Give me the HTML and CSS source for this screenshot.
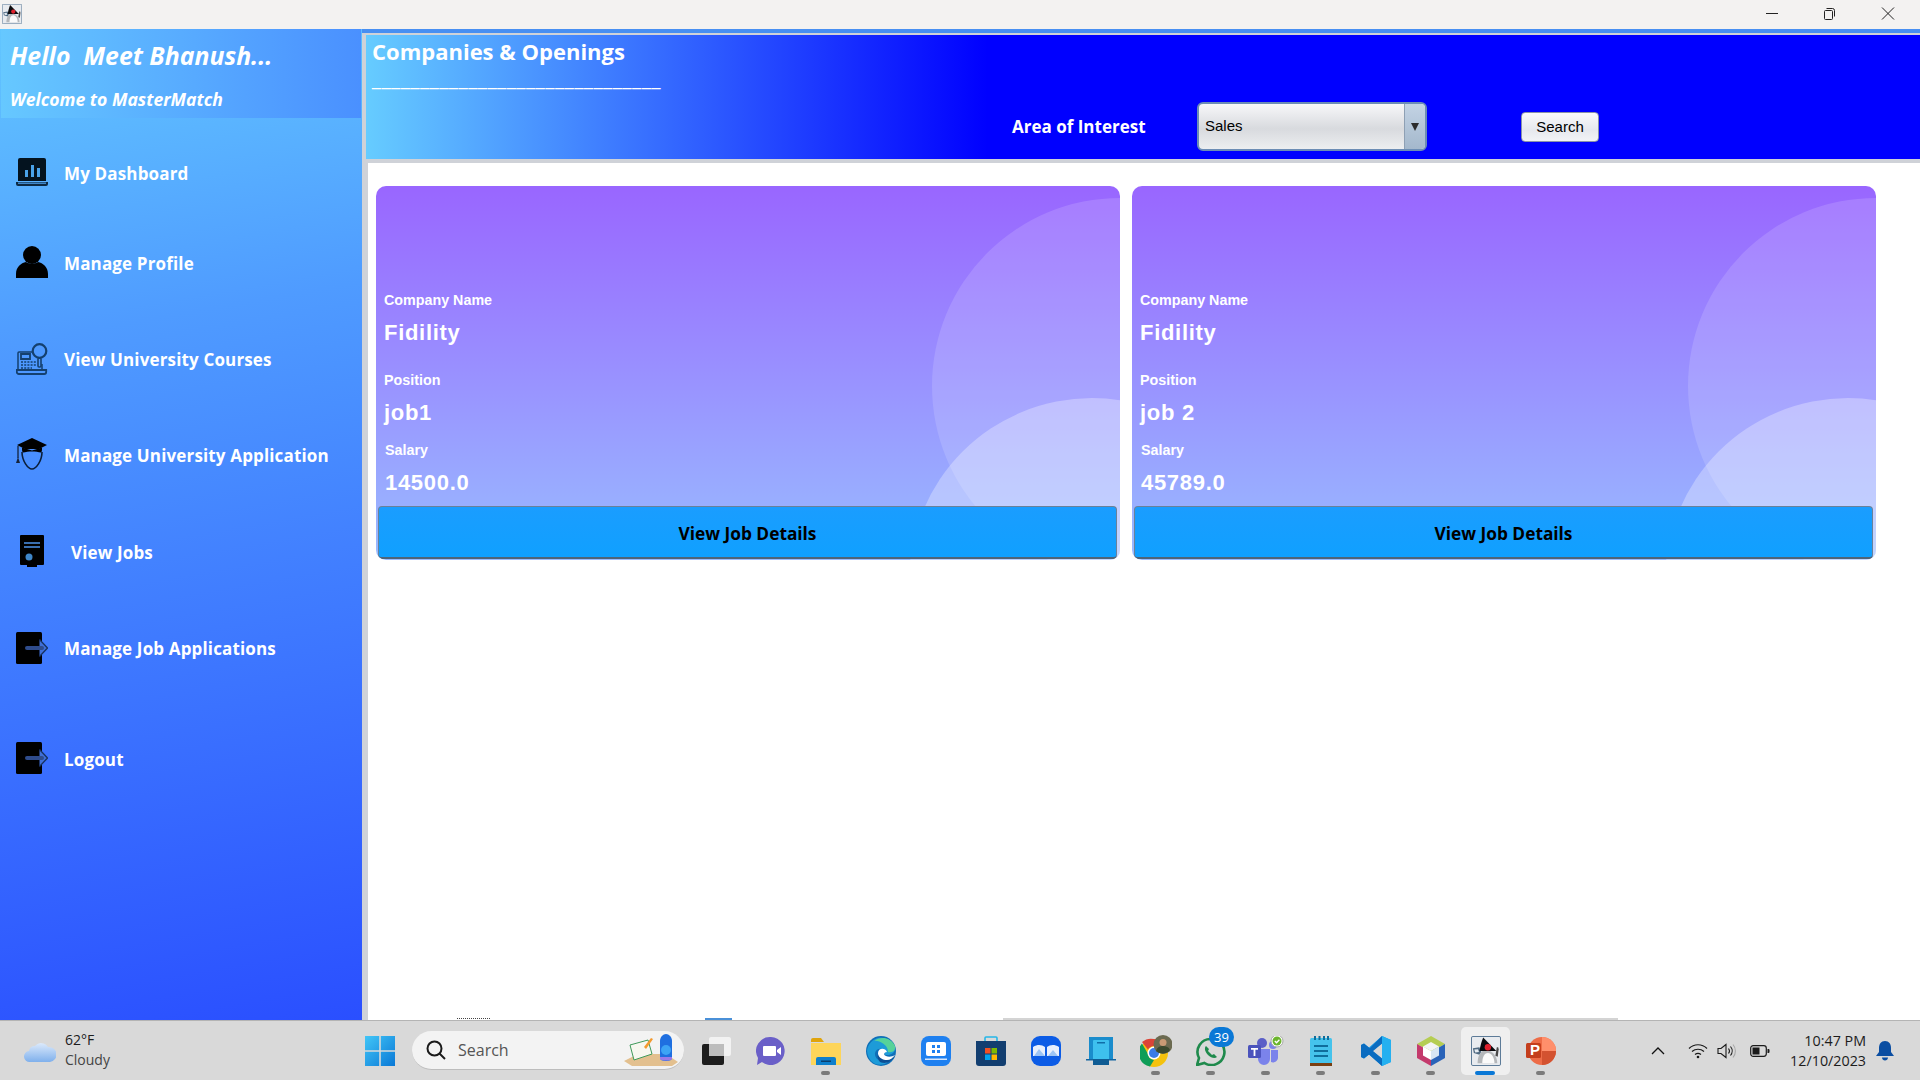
FILE: index.html
```html
<!DOCTYPE html>
<html lang="en">
  <head>
    <meta charset="UTF-8" />
    <meta name="viewport" content="width=device-width, initial-scale=1.0" />
    <title>MasterMatch</title>
    <link rel="stylesheet" href="styles.css">
  </head>
  <body>
    <svg class="defs" width="0" height="0">
      <symbol id="java" viewBox="0 0 32 32">
        <rect x="0.5" y="0.5" width="31" height="31" rx="1.5" fill="#e8ebef" stroke="#4f6f8f" />
        <path d="M2 13l7-1 2 5-2 3-6-2z" fill="#4f6a82" />
        <path d="M3.500 14.500l4-.5 1 3-4 .5z" fill="#e6ecf2" />
        <path d="M26 21l1.500-9 1.500 0 .5 2-1 8z" fill="#4a4a4a" />
        <path d="M7 29c0-7 3-14 9-14s12 6 12 14z" fill="#b4b7ba" />
        <path d="M12 29c0-6 2-11 6-11s7 5 7 11z" fill="#fafafa" />
        <path d="M13 1.500l14 14.500H9c1-5 2-10 4-14.500z" fill="#0b0b0e" />
        <circle cx="18" cy="12" r="3.400" fill="#e0202c" />
      </symbol>
      <symbol id="door" viewBox="0 0 32 32">
        <rect width="26" height="32" rx="1.500" fill="#000" />
        <path d="M23.500 7.500l8 8.500-8 8.500" fill="#3f6fd8" stroke="#16315f" stroke-width="1.300" />
        <rect x="9" y="14" width="19" height="4" rx="2" fill="#2f4c8c" />
      </symbol>
    </svg>

    <div class="app">
      <div class="titlebar">
        <svg class="app-icon" width="20" height="20"><use href="#java" /></svg>
        <div class="win-buttons">
          <svg width="58" height="20" viewBox="0 0 58 20"><path d="M24 10.500h12" stroke="#222" fill="none" /></svg>
          <svg width="58" height="20" viewBox="0 0 58 20"><path d="M25.500 7.500h6a1 1 0 0 1 1 1v7a1 1 0 0 1-1 1h-6a1 1 0 0 1-1-1v-7a1 1 0 0 1 1-1zM26.500 5.500h6a2 2 0 0 1 2 2v6" stroke="#222" fill="none" /></svg>
          <svg width="58" height="20" viewBox="0 0 58 20"><path d="M24 4.500l12 12M36 4.500l-12 12" stroke="#222" fill="none" /></svg>
        </div>
      </div>

      <div class="window">
        <aside class="sidebar">
          <div class="greeting">
            <div class="hello">Hello&nbsp; Meet Bhanush...</div>
            <div class="welcome">Welcome to MasterMatch</div>
          </div>
          <nav class="menu">
            <a class="menu-item">
              <svg class="menu-icon" viewBox="0 -2 32 32">
                <path d="M4 0h24a2 2 0 0 1 2 2v21H2V2a2 2 0 0 1 2-2z" fill="#04131f" />
                <path d="M0 24h32v2a2 2 0 0 1-2 2H2a2 2 0 0 1-2-2z" fill="#0d2a44" />
                <path d="M2 24.500h28v1.500H2z" fill="#3f86c8" />
                <path d="M9 12h3v7H9zM15 7h3v12h-3zM21 10h3v9h-3z" fill="#4aa3ea" />
              </svg>
              <span>My Dashboard</span>
            </a>
            <a class="menu-item">
              <svg class="menu-icon" viewBox="0 0 32 32">
                <circle cx="16" cy="9" r="9" fill="#000" />
                <path d="M0 32v-4c0-7 5-11 10-12 3 2 9 2 12 0 5 1 10 5 10 12v4z" fill="#000" />
              </svg>
              <span>Manage Profile</span>
            </a>
            <a class="menu-item">
              <svg class="menu-icon" viewBox="0 0 32 32" fill="none" stroke="#14406f" stroke-width="1.500">
                <path d="M17 9H3a1 1 0 0 0-1 1v17h24V21" />
                <path d="M0.800 27h29.400v2a2 2 0 0 1-2 2H2.800a2 2 0 0 1-2-2z" stroke-width="1.800" />
                <path d="M5 11h9v5H5z" stroke-width="1.800" />
                <path d="M5 19h15M5 22h15M5 25h11" stroke-dasharray="2 1.200" stroke-width="1.600" />
                <circle cx="23.500" cy="8" r="6.800" stroke-width="2.200" />
                <rect x="22" y="15" width="3" height="9" rx="1" stroke-width="1.600" />
              </svg>
              <span>View University Courses</span>
            </a>
            <a class="menu-item">
              <svg class="menu-icon" viewBox="0 0 32 32">
                <path d="M16 0l15 7-8 4H9L1 7z" fill="#000" />
                <path d="M6 9.500c0 3 0 4 1 5 5-1.500 13-1.500 18 0 1-1 1-2 1-5l-10 3z" fill="#000" />
                <path d="M6 14c0 9 6 17 10 17s10-8 10-17" fill="none" stroke="#0b1f3a" stroke-width="1.600" />
                <path d="M2 8v12" stroke="#000" stroke-width="1" />
                <path d="M2 19l2 6h-4z" fill="#16233a" />
              </svg>
              <span>Manage University Application</span>
            </a>
            <a class="menu-item menu-item-jobs">
              <svg class="menu-icon" viewBox="0 0 32 32">
                <path d="M5 0h22a1 1 0 0 1 1 1v28a1 1 0 0 1-1 1h-6v2h-10v-2H5a1 1 0 0 1-1-1V1a1 1 0 0 1 1-1z" fill="#000" />
                <path d="M8 7h16v2H8zM8 11h16v2H8z" fill="#3a6fb0" />
                <circle cx="13" cy="22" r="3.500" fill="#3f86c8" />
              </svg>
              <span>View Jobs</span>
            </a>
            <a class="menu-item">
              <svg class="menu-icon"><use href="#door" /></svg>
              <span>Manage Job Applications</span>
            </a>
            <a class="menu-item">
              <svg class="menu-icon"><use href="#door" /></svg>
              <span>Logout</span>
            </a>
          </nav>
        </aside>

        <main class="main">
          <header class="topbar">
            <div class="topbar-title">
              <h1>Companies &amp; Openings</h1>
              <div class="rule">______________________________</div>
            </div>
            <div class="filter">
              <label class="filter-label">Area of Interest</label>
              <div class="combo">
                <span class="combo-value">Sales</span>
                <span class="combo-arrow"></span>
              </div>
              <button class="search-btn">Search</button>
            </div>
          </header>

          <section class="content">
            <div class="cards">
              <article class="card">
                <div class="field">
                  <div class="field-label">Company Name</div>
                  <div class="field-value">Fidility</div>
                </div>
                <div class="field field-position">
                  <div class="field-label">Position</div>
                  <div class="field-value">job1</div>
                </div>
                <div class="field field-salary">
                  <div class="field-label">Salary</div>
                  <div class="field-value">14500.0</div>
                </div>
                <button class="details-btn">View Job Details</button>
              </article>
              <article class="card">
                <div class="field">
                  <div class="field-label">Company Name</div>
                  <div class="field-value">Fidility</div>
                </div>
                <div class="field field-position">
                  <div class="field-label">Position</div>
                  <div class="field-value">job 2</div>
                </div>
                <div class="field field-salary">
                  <div class="field-label">Salary</div>
                  <div class="field-value">45789.0</div>
                </div>
                <button class="details-btn">View Job Details</button>
              </article>
            </div>
            <div class="cutoff">
              <span class="cutoff-dark"></span>
              <span class="cutoff-blue"></span>
              <span class="cutoff-gray"></span>
            </div>
          </section>
        </main>
      </div>

      <footer class="taskbar">
        <div class="weather">
          <svg width="32" height="24" viewBox="0 0 32 24">
            <defs>
              <linearGradient id="cloud" x1="0" y1="0" x2="0" y2="1">
                <stop offset="0" stop-color="#dbe9fb" />
                <stop offset="1" stop-color="#7fb0ec" />
              </linearGradient>
            </defs>
            <path d="M6 23a5.500 5.500 0 0 1-1-11 6 6 0 0 1 6-5 8 8 0 0 1 13 1 7.500 7.500 0 0 1 2 15z" fill="url(#cloud)" />
          </svg>
          <div class="weather-text">
            <div>62°F</div>
            <div class="weather-sub">Cloudy</div>
          </div>
        </div>

        <div class="task-cell">
          <svg width="30" height="30" viewBox="0 0 30 30">
            <defs>
              <linearGradient id="win" x1="0" y1="0" x2="1" y2="1">
                <stop offset="0" stop-color="#42c6f7" />
                <stop offset="1" stop-color="#0a78d6" />
              </linearGradient>
            </defs>
            <path d="M0 0h14.200v14.200H0zM15.800 0H30v14.200H15.800zM0 15.800h14.200V30H0zM15.800 15.800H30V30H15.800z" fill="url(#win)" />
          </svg>
        </div>

        <div class="searchbox">
          <svg width="22" height="22" viewBox="0 0 22 22" fill="none" stroke="#1a1a1a" stroke-width="2">
            <circle cx="9.500" cy="9.500" r="7" />
            <path d="M14.500 14.500l5.500 5.500" />
          </svg>
          <span class="searchbox-text">Search</span>
          <svg class="searchbox-art" width="58" height="34" viewBox="0 0 58 34">
            <path d="M2 28l14-7h28l12 8-6 4H10z" fill="#e3c08f" />
            <path d="M8 12l18-5 4 14-18 6z" fill="#f7f7ef" stroke="#3f9a5a" />
            <path d="M22 14l7-9 2 1-7 10z" fill="#f39a2e" />
            <path d="M38 8c0-4 3-7 6-7s6 3 6 7v17c0 2-2 3-6 3s-6-1-6-3z" fill="#1f6fe0" />
            <circle cx="44" cy="17" r="5" fill="#3da4f5" />
            <path d="M38 24h12v2c-2 2-10 2-12 0z" fill="#9a7ae8" />
          </svg>
        </div>

        <div class="task-cell">
          <svg width="30" height="30" viewBox="0 0 30 30">
            <rect x="1" y="8" width="22" height="21" rx="2" fill="#1d1d1d" />
            <rect x="8" y="1" width="22" height="19" rx="2" fill="#f4f4f4" fill-opacity="0.900" />
            <rect x="8" y="8" width="15" height="12" fill="#bdbdbd" />
          </svg>
        </div>
        <div class="task-cell">
          <svg width="30" height="30" viewBox="0 0 30 30">
            <path d="M15 1a14 14 0 1 1-9 25l-5 3 1-7A14 14 0 0 1 15 1z" fill="#6a5fc8" />
            <path d="M8 10h11a1 1 0 0 1 1 1v8a1 1 0 0 1-1 1H8a1 1 0 0 1-1-1v-8a1 1 0 0 1 1-1zM21 14l4-3v8l-4-3z" fill="#fff" />
          </svg>
        </div>
        <div class="task-cell running">
          <svg width="30" height="28" viewBox="0 0 30 28">
            <path d="M0 3a2 2 0 0 1 2-2h8l3 4H0z" fill="#e0a40c" />
            <path d="M0 6h30v22H0z" fill="#fdd55a" />
            <path d="M5 22a2 2 0 0 1 2-2h16a2 2 0 0 1 2 2v6H5z" fill="#0e7fcc" />
            <path d="M10 23.500h10v1.500H10z" fill="#0a3f6e" />
          </svg>
        </div>
        <div class="task-cell">
          <svg width="30" height="30" viewBox="0 0 30 30">
            <circle cx="15" cy="15" r="15" fill="#0f6fb8" />
            <path d="M1 15A14.500 14.500 0 0 1 29 11c1 5-3 8-8 8-3 0-3-2-1-3-3-5-10-4-11 1-1 6 7 11 14 8-8 8-21 3-22-10z" fill="#1d9bd8" />
            <path d="M8 5c6-5 17-4 21 5 1 4-2 7-7 6 0-8-10-12-14-11z" fill="#56d29a" />
            <path d="M12 17c0-5 7-6 9-1-3 0-4 3-1 4 2 1 6 1 9-1-3 7-11 9-15 6-2-2-2-5-2-8z" fill="#fff" />
            <path d="M12 18c1 4 5 6 9 6 3 0 6-2 8-5-2 6-9 10-15 7-2-2-3-5-2-8z" fill="#0b4f95" />
          </svg>
        </div>
        <div class="task-cell">
          <svg width="30" height="30" viewBox="0 0 30 30">
            <rect width="30" height="30" rx="8" fill="#1e80f0" />
            <rect x="5" y="6" width="20" height="14" rx="2" fill="#fff" />
            <path d="M11 9h3v3h-3zM16 9h3v3h-3zM11 14h3v3h-3zM16 14h3v3h-3z" fill="#1e80f0" />
            <path d="M4 22.500h22V24H4z" fill="#d5e6fc" />
          </svg>
        </div>
        <div class="task-cell">
          <svg width="30" height="30" viewBox="0 0 30 30">
            <path d="M9 5V2a1 1 0 0 1 1-1h10a1 1 0 0 1 1 1v3" fill="none" stroke="#25b6e8" stroke-width="1.600" />
            <path d="M0 5h30v22a3 3 0 0 1-3 3H3a3 3 0 0 1-3-3z" fill="#123e70" />
            <path d="M9 12h5.500v5.500H9z" fill="#f25022" />
            <path d="M15.500 12H21v5.500h-5.500z" fill="#7fba00" />
            <path d="M9 18.500h5.500V24H9z" fill="#00a4ef" />
            <path d="M15.500 18.500H21V24h-5.500z" fill="#ffb900" />
          </svg>
        </div>
        <div class="task-cell">
          <svg width="30" height="30" viewBox="0 0 30 30">
            <rect width="30" height="30" rx="9" fill="#0c5ce6" />
            <path d="M2 11c5-3 9-2 12 0v9H2zM16 11c3-2 7-3 12 0v9H16z" fill="#fff" fill-opacity="0.900" />
            <path d="M3 20l5-7 6 7zM17 20l5-6 5 6z" fill="#9cc4f5" />
          </svg>
        </div>
        <div class="task-cell">
          <svg width="30" height="28" viewBox="0 0 30 28">
            <path d="M3 0h24v22H3z" fill="#1a8ccc" />
            <path d="M0 22h30v1.500H0z" fill="#1265a0" />
            <path d="M8 3h14a1 1 0 0 1 1 1v20a2 2 0 0 1-2 2H9a2 2 0 0 1-2-2V4a1 1 0 0 1 1-1z" fill="#3ec0ee" />
            <path d="M7 22h16v6H7z" fill="#0f5c94" />
            <path d="M11 5h8v1.500h-8z" fill="#0f6ea8" />
          </svg>
        </div>
        <div class="task-cell running">
          <svg width="32" height="32" viewBox="0 0 32 32">
            <circle cx="14" cy="18" r="14" fill="#f4c20d" />
            <path d="M14 4a14 14 0 0 1 12.100 7H14a7 7 0 0 0-6 3.500L2 7a14 14 0 0 1 12-3z" fill="#db4437" />
            <path d="M2 8.500l6 10.500a7 7 0 0 0 6 6l-4 6.500A14 14 0 0 1 2 8.500z" fill="#0f9d58" />
            <circle cx="14" cy="18" r="6.500" fill="#fff" />
            <circle cx="14" cy="18" r="5" fill="#3b7be6" />
            <circle cx="23" cy="9.500" r="9.500" fill="#6b6a50" />
            <circle cx="23" cy="7.500" r="3.500" fill="#c99a74" />
            <path d="M16 16c1-4 4-5 7-5s6 1 7 4a9.500 9.500 0 0 1-14 1z" fill="#3b4a2e" />
          </svg>
        </div>
        <div class="task-cell running">
          <svg width="30" height="30" viewBox="0 0 30 30">
            <path d="M15 3a13 13 0 1 1-6.500 24L1 29l2-7A13 13 0 0 1 15 3z" fill="none" stroke="#1f8a4c" stroke-width="2.600" />
            <path d="M10 10c-2 2-1 6 2 9s7 4 9 2l-3-3-2 1-4-4 1-2z" fill="#1f8a4c" />
          </svg>
          <span class="badge">39</span>
        </div>
        <div class="task-cell running">
          <svg width="36" height="30" viewBox="0 0 36 30">
            <circle cx="14" cy="7" r="5" fill="#5b5fc7" />
            <circle cx="25" cy="9" r="4" fill="#7b83eb" />
            <path d="M10 13h12v10a6 6 0 0 1-12 0zM23 14h7v7a5 5 0 0 1-7 5z" fill="#7b83eb" />
            <rect y="9" width="13" height="13" rx="1.500" fill="#4b53bc" />
            <path d="M3 12h7v1.800H7.400V20H5.600v-6.200H3z" fill="#fff" />
            <circle cx="29" cy="5" r="6" fill="#fff" stroke="#a8a8a8" />
            <circle cx="29" cy="5" r="4.500" fill="#6cb52d" />
            <path d="M26.800 5l1.700 1.700 2.900-3" stroke="#fff" stroke-width="1.300" fill="none" />
          </svg>
        </div>
        <div class="task-cell running">
          <svg width="24" height="30" viewBox="0 0 24 30">
            <rect y="2" width="22" height="26" transform="translate(1 0)" fill="#45c3ec" rx="1.500" />
            <path d="M1 27h22v3H1z" fill="#7a3f12" />
            <path d="M5 9h14v2H5zM5 14h14v2H5zM5 19h14v2H5z" fill="#0f6e9c" />
            <path d="M5 0h2v4H5zM9.500 0h2v4h-2zM14 0h2v4h-2zM18 0h2v4h-2z" fill="#0f6e9c" />
          </svg>
        </div>
        <div class="task-cell running">
          <svg width="30" height="30" viewBox="0 0 30 30">
            <path d="M21 0l9 4v22l-9 4L8 18.500 3 22.500 0 21V9l3-1.500L8 11.500z" fill="#1a9ce8" />
            <path d="M21 0l9 4v22l-9 4z" fill="#24b0f0" />
            <path d="M21 7.500V22.500L11 15z" fill="#d8d8d8" />
            <path d="M0 9l3-1.500L21 22.500V30L8 18.500 3 22.500 0 21z" fill="#0a6cc0" />
            <path d="M21 0L3 18l5 0.500L21 7.500z" fill="#0a6cc0" />
          </svg>
        </div>
        <div class="task-cell running">
          <svg width="28" height="30" viewBox="0 0 28 30">
            <path d="M14 0l14 8-14 8L0 8z" fill="#b5cd52" />
            <path d="M0 8l14 8v14L0 22z" fill="#c43a6c" />
            <path d="M28 8L14 16v14l14-8z" fill="#2a63b8" />
            <path d="M14 6l8 4.500-8 4.500-8-4.500z" fill="#f4f4f4" />
            <path d="M6 10.500l8 4.500v9l-8-4.500z" fill="#fff" />
            <path d="M22 10.500L14 15v9l8-4.500z" fill="#d8e6f4" />
          </svg>
        </div>
        <div class="task-cell running current">
          <svg width="30" height="30"><use href="#java" /></svg>
        </div>
        <div class="task-cell running">
          <svg width="30" height="30" viewBox="0 0 30 30">
            <circle cx="16" cy="15" r="14" fill="#ed6c47" />
            <path d="M16 1a14 14 0 0 1 14 14H16z" fill="#ff8f6b" />
            <path d="M16 15h14a14 14 0 0 1-14 14z" fill="#d35230" />
            <rect y="7" width="15" height="15" rx="1.500" fill="#c43e1c" />
            <text class="ppt-letter" x="4" y="19">P</text>
          </svg>
        </div>

        <div class="tray">
          <svg width="14" height="10" viewBox="0 0 14 10"><path d="M1 8l6-6 6 6" fill="none" stroke="#111" stroke-width="1.300" /></svg>
          <svg class="tray-wifi" width="20" height="16" viewBox="0 0 20 16" fill="none" stroke="#1a1a1a" stroke-width="1.200">
            <path d="M1 5.500c5-5 13-5 18 0M4 8.500c3.500-3 8.500-3 12 0M7 11.500c2-1.500 4-1.500 6 0" />
            <circle cx="10" cy="14" r="1.300" fill="#1a1a1a" stroke="none" />
          </svg>
          <svg class="tray-sound" width="20" height="16" viewBox="0 0 20 16" fill="none" stroke="#1a1a1a" stroke-width="1.100">
            <path d="M1 5.500h3l5-4v13l-5-4H1z" />
            <path d="M11.500 5.500a4 4 0 0 1 0 5M13.500 3.500a7 7 0 0 1 0 9" />
            <path d="M16 1.500a10 10 0 0 1 0 13" stroke="#a8a8a8" />
          </svg>
          <svg class="tray-battery" width="20" height="12" viewBox="0 0 20 12">
            <rect x="0.700" y="0.700" width="15.600" height="10.600" rx="2.500" fill="none" stroke="#1a1a1a" stroke-width="1.200" />
            <rect x="2.500" y="2.500" width="7" height="7" fill="#1a1a1a" />
            <path d="M17.500 4h1a1 1 0 0 1 1 1v2a1 1 0 0 1-1 1h-1z" fill="#1a1a1a" />
          </svg>
          <div class="clock">
            <div>10:47 PM</div>
            <div>12/10/2023</div>
          </div>
          <svg class="tray-bell" width="18" height="20" viewBox="0 0 18 20">
            <path d="M9 0c4 0 6 3 6 7v4l3 4H0l3-4V7c0-4 2-7 6-7z" fill="#0b4ea2" />
            <path d="M6 16.500h6c0 2-1.500 3-3 3s-3-1-3-3z" fill="#0b4ea2" />
          </svg>
        </div>
      </footer>
    </div>
  </body>
</html>
```

FILE: styles.css
```css
* {
  box-sizing: border-box;
}

body {
  margin: 0;
  font-family: "Open Sans", "Noto Sans", sans-serif;
  background-color: #fff;
}

.defs {
  display: block;
  height: 0;
}

.app {
  width: 1920px;
  height: 1080px;
  display: flex;
  flex-direction: column;
  overflow: hidden;
}

/* Title bar */

.titlebar {
  height: 29px;
  flex-shrink: 0;
  display: flex;
  align-items: center;
  justify-content: space-between;
  padding-left: 2px;
  background-color: #f3f2f1;
}

.app-icon {
  margin-top: -1px;
}

.win-buttons {
  display: flex;
  margin-right: 4px;
  margin-top: -3px;
}

.window {
  flex: 1;
  display: flex;
  min-height: 0;
}

/* Sidebar */

.sidebar {
  width: 362px;
  flex-shrink: 0;
  display: flex;
  flex-direction: column;
  color: #fff;
  background: linear-gradient(170deg, #62c6ff 0%, #4f9bff 30%, #2a4fff 100%);
}

.greeting {
  width: 360px;
  height: 89px;
  margin-left: 1px;
  padding: 10px 0 0 9px;
  font-style: italic;
  font-weight: 700;
  background: linear-gradient(90deg, #66c8ff 0%, #4a90ff 100%);
}

.hello {
  font-size: 24.800px;
  line-height: 32px;
}

.welcome {
  margin-top: 16px;
  font-size: 17.600px;
  line-height: 24px;
}

.menu {
  display: grid;
  grid-template-rows: 88px 92px 101px 90px 104px 89px 132px;
  padding-top: 11px;
}

.menu-item {
  display: flex;
  align-items: center;
  gap: 16px;
  padding-left: 16px;
  font-size: 17px;
  font-weight: 700;
  letter-spacing: 0.150px;
}

.menu-icon {
  width: 32px;
  height: 32px;
  margin-top: -2px;
  flex-shrink: 0;
}

.menu-item-jobs {
  gap: 23px;
}

/* Main panel */

.main {
  flex: 1;
  display: flex;
  flex-direction: column;
  min-width: 0;
  padding-left: 4px;
  background-color: #cfd2d8;
  border-top: 4px solid #478ff2;
}

.topbar {
  height: 124px;
  flex-shrink: 0;
  margin-top: 2px;
  display: flex;
  flex-direction: column;
  padding: 1px 0 0 6px;
  color: #fff;
  background: linear-gradient(90deg, #66ccff 0%, #0000ff 40%);
}

.topbar h1 {
  margin: 0;
  font-size: 22px;
  font-weight: 700;
  line-height: 30px;
}

.rule {
  font-family: "Liberation Sans", sans-serif;
  font-size: 16px;
  letter-spacing: 0.740px;
  line-height: 20px;
  margin-top: 5px;
  height: 20px;
}

.filter {
  display: flex;
  align-items: center;
  height: 49px;
  margin-top: 11px;
  padding-left: 640px;
}

.filter-label {
  width: 185px;
  font-size: 17px;
  font-weight: 700;
}

.combo {
  width: 230px;
  height: 49px;
  display: flex;
  border: 2px solid #6c8db5;
  border-radius: 6px;
  overflow: hidden;
  background: linear-gradient(180deg, #f7f7f9 0%, #d8dade 55%, #eceef0 100%);
}

.combo-value {
  flex: 1;
  padding-left: 6px;
  font-family: "Liberation Sans", sans-serif;
  font-size: 15px;
  line-height: 43px;
  color: #000;
}

.combo-arrow {
  width: 21px;
  position: relative;
  border-left: 1px solid #8ea0b4;
  background: linear-gradient(180deg, #c3d3e4 0%, #a4b8cc 100%);
}

.combo-arrow::after {
  content: "";
  position: absolute;
  left: 6px;
  top: 19px;
  border-left: 4px solid transparent;
  border-right: 4px solid transparent;
  border-top: 8px solid #2c2c2c;
}

.search-btn {
  width: 78px;
  height: 30px;
  margin-left: 94px;
  padding: 0;
  font-family: "Liberation Sans", sans-serif;
  font-size: 15px;
  color: #000;
  border: 1px solid #8a93a8;
  border-radius: 4px;
  background: linear-gradient(180deg, #fafafc 0%, #e6e8ee 60%, #f2f3f6 100%);
}

.content {
  flex: 1;
  display: flex;
  flex-direction: column;
  margin: 4px 0 0 2px;
  padding: 23px 0 0 8px;
  background-color: #fff;
}

.cards {
  display: grid;
  grid-template-columns: 744px 744px;
  gap: 12px;
}

/* Job cards */

.card {
  position: relative;
  height: 374px;
  padding-top: 103px;
  border-radius: 10px;
  overflow: hidden;
  color: #fff;
  background: linear-gradient(180deg, #9966ff 0%, #99bbff 100%);
}

.card::before,
.card::after {
  content: "";
  position: absolute;
  border-radius: 50%;
}

.card::before {
  left: 556px;
  top: 12px;
  width: 376px;
  height: 376px;
  background-color: rgba(255, 255, 255, 0.14);
}

.card::after {
  left: 533px;
  top: 212px;
  width: 366px;
  height: 366px;
  background-color: rgba(255, 255, 255, 0.3);
}

.field {
  position: relative;
  z-index: 1;
  padding-left: 8px;
  font-family: "Liberation Sans", sans-serif;
  font-weight: 700;
}

.field-position {
  margin-top: 14px;
}

.field-salary {
  margin-top: 4px;
  padding-left: 9px;
}

.field-label {
  font-size: 14.300px;
  line-height: 22px;
}

.field-value {
  font-size: 22px;
  line-height: 44px;
  letter-spacing: 0.700px;
}

.details-btn {
  position: absolute;
  z-index: 1;
  left: 2px;
  right: 3px;
  bottom: 1px;
  height: 53px;
  padding-top: 4px;
  font-family: "Open Sans", sans-serif;
  font-size: 17.300px;
  font-weight: 700;
  color: #000;
  border: 1px solid #6a8199;
  border-bottom: 2px solid #4f6478;
  border-radius: 4px;
  background: linear-gradient(180deg, #1a9dff 0%, #10a0ff 100%);
}

.cutoff {
  margin-top: auto;
  margin-left: -8px;
  height: 2px;
  display: flex;
}

.cutoff-dark {
  width: 33px;
  margin-left: 89px;
  border-top: 1px dotted #444;
}

.cutoff-blue {
  width: 27px;
  margin-left: 215px;
  background-color: #4a90d8;
}

.cutoff-gray {
  width: 615px;
  margin-left: 271px;
  background-color: #d4d4d4;
}

/* Taskbar */

.taskbar {
  height: 60px;
  flex-shrink: 0;
  display: flex;
  align-items: center;
  font-size: 14px;
  color: #1c1c1c;
  background-color: #d9d9d9;
  border-top: 1px solid #b4b4b4;
  padding-left: 24px;
}

.weather {
  width: 328.500px;
  display: flex;
  align-items: center;
  gap: 9px;
}

.weather-text {
  margin-top: -2px;
  line-height: 20px;
}

.weather-sub {
  color: #444;
}

.task-cell {
  position: relative;
  width: 55px;
  height: 58px;
  flex-shrink: 0;
  display: flex;
  align-items: center;
  justify-content: center;
}

.task-cell.running::after {
  content: "";
  position: absolute;
  left: 23px;
  bottom: 5px;
  width: 9px;
  height: 4px;
  border-radius: 2px;
  background-color: #7b7b7b;
}

.task-cell.current {
  background: none;
}

.task-cell.current::before {
  content: "";
  position: absolute;
  left: 3px;
  top: 5px;
  width: 49px;
  height: 48px;
  border-radius: 5px;
  background-color: #efefef;
}

.task-cell.current svg {
  position: relative;
}

.task-cell.current::after {
  left: 17px;
  width: 20px;
  background-color: #0a78d6;
}

.badge {
  position: absolute;
  left: 26px;
  top: 5px;
  width: 25px;
  height: 20px;
  border-radius: 10px;
  font-size: 13px;
  line-height: 20px;
  text-align: center;
  color: #fff;
  background-color: #0a78d6;
}

.ppt-letter {
  font-family: "Liberation Sans", sans-serif;
  font-size: 15px;
  font-weight: 700;
  fill: #fff;
}

.searchbox {
  width: 272px;
  height: 39px;
  margin-left: 4.500px;
  margin-right: 4px;
  flex-shrink: 0;
  display: flex;
  align-items: center;
  padding-left: 13px;
  border-radius: 20px;
  background-color: #f3f3f3;
  border-bottom: 1px solid #bdbdbd;
}

.searchbox-text {
  margin-left: 11px;
  font-size: 16px;
  color: #555;
}

.searchbox-art {
  margin-left: auto;
  margin-right: 4px;
}

.tray {
  flex: 1;
  display: flex;
  align-items: center;
  padding-left: 83px;
}

.tray-wifi {
  margin-left: 23px;
}

.tray-sound {
  margin-left: 9px;
}

.tray-battery {
  margin-left: 13px;
}

.clock {
  width: 96px;
  text-align: right;
  line-height: 20px;
  font-size: 14.300px;
}

.tray-bell {
  margin-left: 10px;
}
```
